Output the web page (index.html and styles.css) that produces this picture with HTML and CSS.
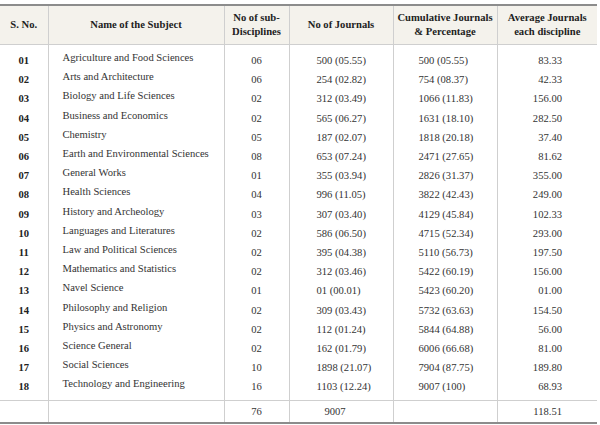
FILE: index.html
```html
<!DOCTYPE html>
<html>
<head>
<meta charset="utf-8">
<link rel="stylesheet" href="styles.css">
</head>
<body>
<table class="tbl">
  <colgroup>
    <col class="c1"><col class="c2"><col class="c3"><col class="c4"><col class="c5"><col class="c6">
  </colgroup>
  <thead>
    <tr>
      <th>S. No.</th>
      <th>Name of the Subject</th>
      <th>No of sub-<br>Disciplines</th>
      <th>No of Journals</th>
      <th>Cumulative Journals<br>&amp; Percentage</th>
      <th>Average Journals<br>each discipline</th>
    </tr>
  </thead>
  <tbody>
    <tr class="spacer"><td></td><td></td><td></td><td></td><td></td><td></td></tr>
    <tr><td class="sno">01</td><td class="name">Agriculture and Food Sciences</td><td class="sub">06</td><td class="jn">500 (05.55)</td><td class="cum">500 (05.55)</td><td class="avg">83.33</td></tr>
    <tr><td class="sno">02</td><td class="name">Arts and Architecture</td><td class="sub">06</td><td class="jn">254 (02.82)</td><td class="cum">754 (08.37)</td><td class="avg">42.33</td></tr>
    <tr><td class="sno">03</td><td class="name">Biology and Life Sciences</td><td class="sub">02</td><td class="jn">312 (03.49)</td><td class="cum">1066 (11.83)</td><td class="avg">156.00</td></tr>
    <tr><td class="sno">04</td><td class="name">Business and Economics</td><td class="sub">02</td><td class="jn">565 (06.27)</td><td class="cum">1631 (18.10)</td><td class="avg">282.50</td></tr>
    <tr><td class="sno">05</td><td class="name">Chemistry</td><td class="sub">05</td><td class="jn">187 (02.07)</td><td class="cum">1818 (20.18)</td><td class="avg">37.40</td></tr>
    <tr><td class="sno">06</td><td class="name">Earth and Environmental Sciences</td><td class="sub">08</td><td class="jn">653 (07.24)</td><td class="cum">2471 (27.65)</td><td class="avg">81.62</td></tr>
    <tr><td class="sno">07</td><td class="name">General Works</td><td class="sub">01</td><td class="jn">355 (03.94)</td><td class="cum">2826 (31.37)</td><td class="avg">355.00</td></tr>
    <tr><td class="sno">08</td><td class="name">Health Sciences</td><td class="sub">04</td><td class="jn">996 (11.05)</td><td class="cum">3822 (42.43)</td><td class="avg">249.00</td></tr>
    <tr><td class="sno">09</td><td class="name">History and Archeology</td><td class="sub">03</td><td class="jn">307 (03.40)</td><td class="cum">4129 (45.84)</td><td class="avg">102.33</td></tr>
    <tr><td class="sno">10</td><td class="name">Languages and Literatures</td><td class="sub">02</td><td class="jn">586 (06.50)</td><td class="cum">4715 (52.34)</td><td class="avg">293.00</td></tr>
    <tr><td class="sno">11</td><td class="name">Law and Political Sciences</td><td class="sub">02</td><td class="jn">395 (04.38)</td><td class="cum">5110 (56.73)</td><td class="avg">197.50</td></tr>
    <tr><td class="sno">12</td><td class="name">Mathematics and Statistics</td><td class="sub">02</td><td class="jn">312 (03.46)</td><td class="cum">5422 (60.19)</td><td class="avg">156.00</td></tr>
    <tr><td class="sno">13</td><td class="name">Navel Science</td><td class="sub">01</td><td class="jn">01 (00.01)</td><td class="cum">5423 (60.20)</td><td class="avg">01.00</td></tr>
    <tr><td class="sno">14</td><td class="name">Philosophy and Religion</td><td class="sub">02</td><td class="jn">309 (03.43)</td><td class="cum">5732 (63.63)</td><td class="avg">154.50</td></tr>
    <tr><td class="sno">15</td><td class="name">Physics and Astronomy</td><td class="sub">02</td><td class="jn">112 (01.24)</td><td class="cum">5844 (64.88)</td><td class="avg">56.00</td></tr>
    <tr><td class="sno">16</td><td class="name">Science General</td><td class="sub">02</td><td class="jn">162 (01.79)</td><td class="cum">6006 (66.68)</td><td class="avg">81.00</td></tr>
    <tr><td class="sno">17</td><td class="name">Social Sciences</td><td class="sub">10</td><td class="jn">1898 (21.07)</td><td class="cum">7904 (87.75)</td><td class="avg">189.80</td></tr>
    <tr class="last"><td class="sno">18</td><td class="name">Technology and Engineering</td><td class="sub">16</td><td class="jn">1103 (12.24)</td><td class="cum">9007 (100)</td><td class="avg">68.93</td></tr>
  </tbody>
  <tfoot>
    <tr><td></td><td></td><td class="sub">76</td><td class="ftot">9007</td><td></td><td class="avg">118.51</td></tr>
  </tfoot>
</table>
</body>
</html>
```
FILE: styles.css
```css
html, body {
  margin: 0;
  padding: 0;
  background: #ffffff;
}
body {
  padding-top: 4px;
  font-family: "Liberation Serif", "Times New Roman", serif;
  color: #333333;
}
.tbl {
  border-collapse: collapse;
  width: 597px;
  table-layout: fixed;
  font-size: 10.6px;
  border-top: 2px solid #8c8c8c;
  border-bottom: 2px solid #8c8c8c;
}
.c1 { width: 48px; }
.c2 { width: 176px; }
.c3 { width: 65px; }
.c4 { width: 104px; }
.c5 { width: 104px; }
.c6 { width: 100px; }

.tbl th, .tbl td {
  border-left: 1px solid #cfcfcf;
  padding: 0;
}
.tbl th:first-child, .tbl td:first-child {
  border-left: none;
}
.tbl thead th {
  background: #f4f2ec;
  height: 38px;
  font-weight: bold;
  color: #222222;
  line-height: 14px;
  text-align: center;
  vertical-align: middle;
  border-bottom: 1px solid #cfcfcf;
}
.tbl tbody td {
  height: 19.2px;
  line-height: 12px;
  vertical-align: middle;
  white-space: nowrap;
}
.tbl tbody tr.spacer td {
  height: 6.5px;
}
.tbl tbody tr.last td {
  height: 19.2px;
  padding-bottom: 3.5px;
}
.tbl tbody td.name {
  text-align: left;
  padding-left: 14px;
  padding-bottom: 6px;
  height: 13.2px;
}
.tbl tbody tr.last td.name {
  padding-bottom: 9.5px;
  height: 13.2px;
}
.tbl tfoot td {
  height: 20.5px;
  line-height: 12px;
  vertical-align: middle;
  border-top: 1px solid #cfcfcf;
}
.sno {
  text-align: center;
  font-weight: bold;
  color: #222222;
}
.sub {
  text-align: center;
}
.tbl td.jn {
  text-align: left;
  padding-left: 27px;
}
.tbl td.cum {
  text-align: left;
  padding-left: 25px;
}
.tbl td.avg {
  text-align: right;
  padding-right: 35px;
}
.tbl td.ftot {
  text-align: center;
  padding-right: 12px;
}
```
